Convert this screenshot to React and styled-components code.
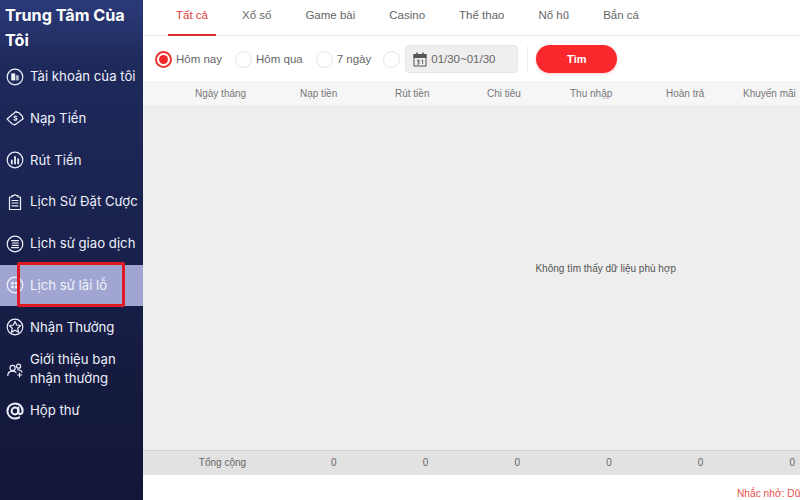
import React from 'react'
import styled, { createGlobalStyle } from 'styled-components'

const Global = createGlobalStyle`
  html, body { margin: 0; padding: 0; height: 100%; overflow: hidden; background: #fff; }
  * { box-sizing: border-box; }
`

const Page = styled.div`
  display: flex;
  width: 800px;
  height: 500px;
  overflow: hidden;
  font-family: "Liberation Sans", Arial, sans-serif;
`

const Sidebar = styled.aside`
  position: relative;
  flex: 0 0 143px;
  height: 500px;
  background: linear-gradient(180deg, #2b3b7a 0%, #1f2a5c 12%, #1b2350 40%, #151b3f 75%, #12173a 100%);
  color: #eef1fb;
  font-family: Inter, "Noto Sans", sans-serif;
`

const Title = styled.h1`
  margin: 0;
  padding: 3px 5px 0;
  height: 55.8px;
  font-size: 16.2px;
  line-height: 25px;
  font-weight: 700;
  color: #fff;
`

const Menu = styled.nav`
  display: flex;
  flex-direction: column;
`

const Item = styled.div`
  display: flex;
  align-items: center;
  gap: 6px;
  height: 41.75px;
  padding-left: 6px;
  font-size: 13.2px;
  line-height: 19px;
  white-space: nowrap;
  background: ${(p) => (p.$active ? '#a0a6d1' : 'transparent')};
  color: ${(p) => (p.$active ? '#f2f3fb' : '#eef1fb')};
  svg { flex: 0 0 18px; }
`

const Marker = styled.div`
  position: absolute;
  left: 17px;
  top: 262px;
  width: 108px;
  height: 45px;
  border: 3px solid #e01a22;
  border-radius: 2px;
`

const Main = styled.main`
  flex: 1;
  min-width: 0;
  display: flex;
  flex-direction: column;
  height: 500px;
`

const Tabs = styled.div`
  display: flex;
  height: 36px;
  padding-left: 33px;
  gap: 34px;
  border-bottom: 1px solid #e8e8e8;
`

const Tab = styled.div`
  position: relative;
  height: 35px;
  line-height: 30px;
  font-size: 11.5px;
  color: ${(p) => (p.$active ? '#dd3c3c' : '#666')};
  white-space: nowrap;
  ${(p) => p.$active && `
    &::after {
      content: "";
      position: absolute;
      left: -8px;
      right: -8px;
      bottom: -1px;
      height: 2px;
      background: #d8302f;
    }
  `}
`

const Filters = styled.div`
  display: flex;
  align-items: center;
  height: 46px;
  padding-left: 12px;
`

const RadioWrap = styled.div`
  display: flex;
  align-items: center;
  gap: 4px;
  margin-right: ${(p) => p.$gap}px;
  font-size: 11.5px;
  color: #666;
  white-space: nowrap;
`

const Radio = styled.span`
  display: flex;
  align-items: center;
  justify-content: center;
  width: 17px;
  height: 17px;
  border-radius: 50%;
  background: #fff;
  border: ${(p) => (p.$on ? '2px solid #e8352f' : '1.5px solid #e4e4e4')};
  &::after {
    content: "";
    display: ${(p) => (p.$on ? 'block' : 'none')};
    width: 9px;
    height: 9px;
    border-radius: 50%;
    background: #f0282a;
  }
`

const DateBox = styled.div`
  display: flex;
  align-items: center;
  gap: 4px;
  width: 113px;
  height: 28px;
  padding-left: 7px;
  background: #efefef;
  border: 1px solid #e6e6e6;
  border-radius: 4px;
  font-size: 11.5px;
  color: #666;
`

const Divider = styled.div`
  width: 1px;
  height: 26px;
  margin: 0 8px 0 9px;
  background: #eee;
`

const Search = styled.button`
  width: 81px;
  height: 28px;
  border: 0;
  border-radius: 14px;
  background: #f9282c;
  color: #fff;
  font: 700 11px "Liberation Sans", Arial, sans-serif;
  box-shadow: 0 1px 3px rgba(249, 40, 44, 0.25);
`

const HeadRow = styled.div`
  display: grid;
  grid-template-columns: 105px 95px 92px 83px 96px 77px 57px;
  height: 23px;
  align-items: center;
  padding: 0 0 2px 52px;
  background: #f6f6f6;
  border-top: 1px solid #ececec;
  font-size: 10px;
  color: #777;
  white-space: nowrap;
`

const Body = styled.div`
  flex: 0 0 345px;
  display: flex;
  align-items: center;
  justify-content: flex-end;
  padding: 0 124px 18px 0;
  background: #eee;
  font-size: 10px;
  color: #555;
`

const TotalRow = styled.div`
  display: grid;
  grid-template-columns: 145px repeat(6, 91.7px);
  height: 25px;
  align-items: center;
  padding-bottom: 2px;
  background: #e3e2e2;
  border-top: 1px solid #d3d3d3;
  font-size: 10px;
  color: #666;
  white-space: nowrap;
`

const TotalCell = styled.div`
  text-align: center;
  ${(p) => p.$first && 'padding-left: 14px;'}
`

const Note = styled.div`
  margin-top: 13px;
  padding-left: 594px;
  font-size: 10.2px;
  color: #e8504d;
  white-space: nowrap;
`

const Icon = ({ children }) => (
  <svg width="18" height="18" viewBox="0 0 18 18" fill="none" stroke="currentColor" strokeWidth="1.2" strokeLinecap="round" strokeLinejoin="round">
    {children}
  </svg>
)

const items = [
  { label: 'Tài khoản của tôi', icon: <><circle cx="9" cy="9" r="7.8" /><rect x="5.2" y="5.4" width="4" height="7" fill="currentColor" stroke="none" /><rect x="9.8" y="7.2" width="3" height="5.2" fill="currentColor" stroke="none" opacity=".7" /></> },
  { label: 'Nạp Tiền', icon: <><path d="M1 10 10 2.5c.7.8 1.6 1.1 2.6 1l4 4c-.2 1 0 1.8.6 2.3L8.6 16c-.7-.8-1.4-1-2.3-1l-4-3.6c.1-.6-.4-1-1.3-1.4Z" /><path d="M10.6 7.4C9.6 6.6 7.8 7.3 8.3 8.4c.4 1 2.4.5 2.6 1.6.1 1-1.7 1.7-2.9.7" /></> },
  { label: 'Rút Tiền', icon: <><circle cx="9" cy="9" r="7.8" /><path d="M5.8 9.5v3M9 6v6.5M12.2 8.2v4.3" strokeWidth="1.8" /></> },
  { label: 'Lịch Sử Đặt Cược', icon: <><path d="M3.5 4h2.5V2.6h1.6a1.6 1.6 0 0 1 2.8 0H12V4h2.5v12.5h-11Z" /><path d="M6 7.5h6M6 10h6M6 12.8h6" /></> },
  { label: 'Lịch sử giao dịch', icon: <><circle cx="9" cy="9" r="7.8" /><path d="M5.5 5.6h7M6.3 8h6M6.3 10.3h6M5.5 12.6h7" /></> },
  { label: 'Lịch sử lãi lỗ', active: true, icon: <><circle cx="9" cy="9" r="7.8" /><rect x="5.2" y="6" width="2.6" height="2.4" rx=".6" fill="currentColor" stroke="none" /><rect x="9" y="6" width="3.6" height="2.4" rx=".6" fill="currentColor" stroke="none" /><rect x="5.2" y="9.8" width="2.6" height="2.4" rx=".6" fill="currentColor" stroke="none" /><rect x="9" y="9.8" width="3.6" height="2.4" rx=".6" fill="currentColor" stroke="none" /></> },
  { label: 'Nhận Thưởng', icon: <><circle cx="9" cy="9" r="7.8" /><path d="m9 3.4 1.7 3.6 3.9.5-2.9 2.7.8 3.9L9 12.2l-3.5 1.9.8-3.9-2.9-2.7 3.9-.5Z" /></> },
  { label: <>Giới thiệu bạn<br />nhận thưởng</>, icon: <><circle cx="6.6" cy="8" r="2.6" /><circle cx="12.6" cy="6.2" r="2" /><path d="M1.8 15.5c0-2.8 2-4.4 4.8-4.4 1.4 0 2.6.4 3.4 1.2M11.6 10c1.8-.3 4 .5 4.4 2.2" /><path d="M13.6 13v4M11.6 15h4" /></> },
  { label: 'Hộp thư', icon: <><circle cx="9" cy="9" r="3.4" strokeWidth="2" /><path d="M12.4 5.6v4.8c0 2.6 4.2 2.4 4.2-1.4 0-4.4-3.4-7.6-7.6-7.6a7.6 7.6 0 0 0 0 15.2c1.6 0 3-.4 4.2-1.2" strokeWidth="2" /></> },
]

const tabs = ['Tất cả', 'Xổ số', 'Game bài', 'Casino', 'Thể thao', 'Nổ hũ', 'Bắn cá']
const heads = ['Ngày tháng', 'Nạp tiền', 'Rút tiền', 'Chi tiêu', 'Thu nhập', 'Hoàn trả', 'Khuyến mãi']

export default function App() {
  return (
    <Page>
      <Global />
      <Sidebar>
        <Title>Trung Tâm Của Tôi</Title>
        <Menu>
          {items.map((it, i) => (
            <Item key={i} $active={it.active}>
              <Icon>{it.icon}</Icon>
              <span>{it.label}</span>
            </Item>
          ))}
        </Menu>
        <Marker />
      </Sidebar>
      <Main>
        <Tabs>
          {tabs.map((t, i) => <Tab key={t} $active={i === 0}>{t}</Tab>)}
        </Tabs>
        <Filters>
          <RadioWrap $gap={13}><Radio $on />Hôm nay</RadioWrap>
          <RadioWrap $gap={13}><Radio />Hôm qua</RadioWrap>
          <RadioWrap $gap={12}><Radio />7 ngày</RadioWrap>
          <RadioWrap $gap={5}><Radio /></RadioWrap>
          <DateBox>
            <svg width="14" height="15" viewBox="0 0 14 15" fill="none" stroke="#555">
              <rect x="1" y="2.5" width="12" height="11.5" />
              <rect x="1" y="2.5" width="12" height="3" fill="#555" />
              <path d="M4 .5v3M10 .5v3" strokeWidth="1.5" />
              <path d="M4 8h2v1.5H4.6H6V12H4M8.5 8.4 9.6 8v4" strokeWidth=".9" />
            </svg>
            01/30~01/30
          </DateBox>
          <Divider />
          <Search>Tìm</Search>
        </Filters>
        <HeadRow>
          {heads.map((h) => <div key={h}>{h}</div>)}
        </HeadRow>
        <Body>Không tìm thấy dữ liệu phù hợp</Body>
        <TotalRow>
          <TotalCell $first>Tổng cộng</TotalCell>
          {[0, 1, 2, 3, 4, 5].map((n) => <TotalCell key={n}>0</TotalCell>)}
        </TotalRow>
        <Note>Nhắc nhở: Dữ</Note>
      </Main>
    </Page>
  )
}
